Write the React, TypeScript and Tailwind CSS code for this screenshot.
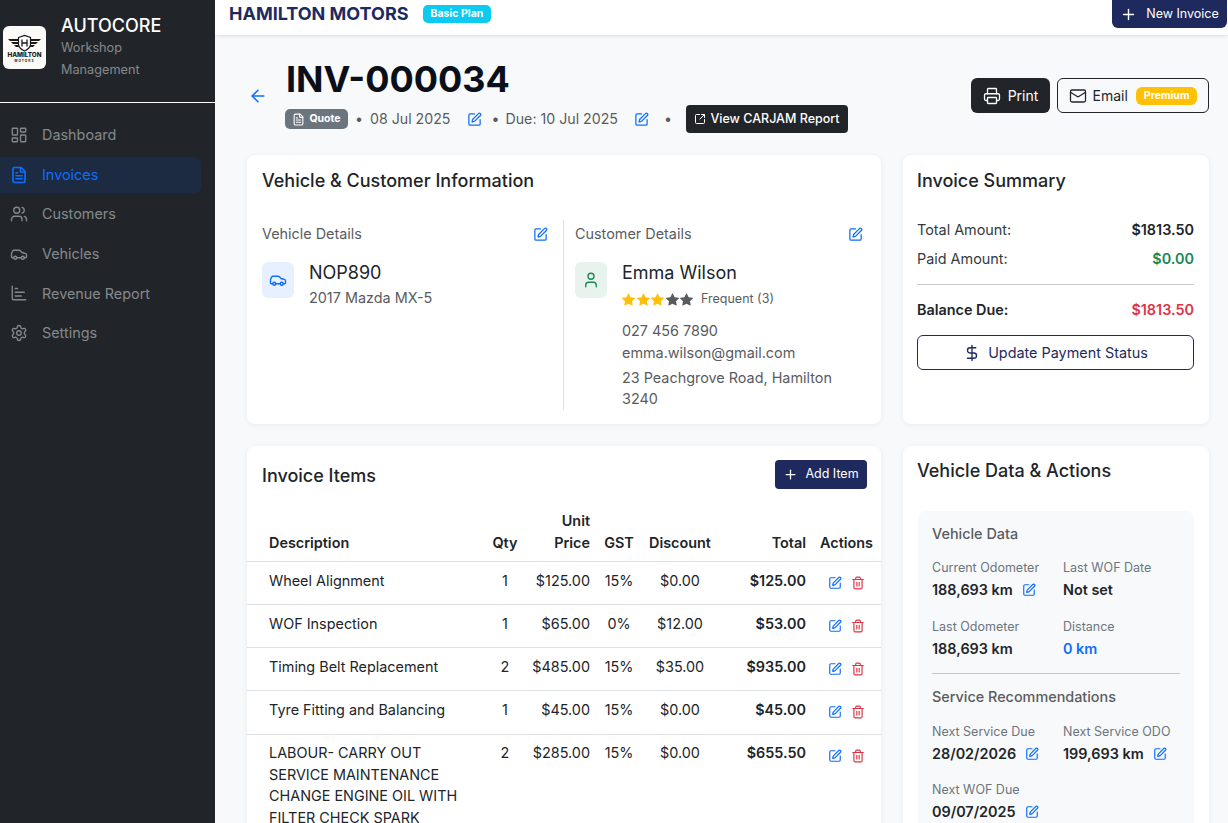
import {
  ArrowLeft,
  Car,
  ChartBar,
  DollarSign,
  FileText,
  LayoutDashboard,
  Mail,
  Plus,
  Printer,
  Settings,
  SquareArrowOutUpRight,
  SquarePen,
  Trash2,
  User,
  Users,
} from "lucide-react";
import { BsStarFill } from "react-icons/bs";

const navItems = [
  { label: "Dashboard", icon: LayoutDashboard },
  { label: "Invoices", icon: FileText, active: true },
  { label: "Customers", icon: Users },
  { label: "Vehicles", icon: Car },
  { label: "Revenue Report", icon: ChartBar },
  { label: "Settings", icon: Settings },
];

const rows = [
  { desc: ["Wheel Alignment"], qty: "1", price: "$125.00", gst: "15%", disc: "$0.00", total: "$125.00" },
  { desc: ["WOF Inspection"], qty: "1", price: "$65.00", gst: "0%", disc: "$12.00", total: "$53.00" },
  { desc: ["Timing Belt Replacement"], qty: "2", price: "$485.00", gst: "15%", disc: "$35.00", total: "$935.00" },
  { desc: ["Tyre Fitting and Balancing"], qty: "1", price: "$45.00", gst: "15%", disc: "$0.00", total: "$45.00" },
  {
    desc: ["LABOUR- CARRY OUT", "SERVICE MAINTENANCE", "CHANGE ENGINE OIL WITH", "FILTER CHECK SPARK"],
    qty: "2",
    price: "$285.00",
    gst: "15%",
    disc: "$0.00",
    total: "$655.50",
  },
];

function Logo() {
  return (
    <div className="flex h-[43px] w-[43px] shrink-0 items-center justify-center rounded-md bg-[#fbfaf8]">
      <svg viewBox="0 0 43 43" className="h-[43px] w-[43px]">
        <path d="M5 13h10l1 2H7zM8 16h8l1 2h-7zM11 19h6l1 2h-5z" fill="#1a1a1a" />
        <path d="M38 13H28l-1 2h9zM35 16h-8l-1 2h7zM32 19h-6l-1 2h5z" fill="#1a1a1a" />
        <path d="M15.500 11.500 21.500 9.500l6 2v7c0 3-3 5-6 6.500-3-1.500-6-3.500-6-6.500z" fill="#fff" stroke="#1a1a1a" strokeWidth="1.200" />
        <path d="M19 13.500v7M24 13.500v7M19 17h5" stroke="#1a1a1a" strokeWidth="1.300" fill="none" />
        <text x="21.500" y="31" textAnchor="middle" fontSize="6.300" fontWeight="800" fill="#1a1a1a" fontFamily="Inter, sans-serif">
          HAMILTON
        </text>
        <text x="21.500" y="35.500" textAnchor="middle" fontSize="3.200" fontWeight="700" letterSpacing="1" fill="#1a1a1a" fontFamily="Inter, sans-serif">
          MOTORS
        </text>
      </svg>
    </div>
  );
}

function Sidebar() {
  return (
    <aside className="flex w-[215px] shrink-0 flex-col bg-[#212529]">
      <div className="flex h-[103px] gap-[15px] border-b border-white pl-[3px] pt-[15px]">
        <div className="pt-[11px]">
          <Logo />
        </div>
        <div>
          <div className="text-[18px] leading-[22px] font-medium text-white">AUTOCORE</div>
          <div className="w-[100px] text-[12.700px] leading-[22px] text-[#85898d]">Workshop Management</div>
        </div>
      </div>
      <nav className="flex flex-col gap-[3.600px] pt-[14px]">
        {navItems.map((item) => {
          const Icon = item.icon;
          return (
            <a
              key={item.label}
              className={`flex h-[36px] w-[201px] items-center gap-[14px] rounded-r-md pl-[10px] text-[14.400px] ${
                item.active ? "bg-[#1c2b42] text-[#0d6efd]" : "text-[#85898d]"
              }`}
            >
              <Icon size={18} strokeWidth={item.active ? 2.200 : 1.800} />
              {item.label}
            </a>
          );
        })}
      </nav>
    </aside>
  );
}

function TopBar() {
  return (
    <header className="flex h-[35px] shrink-0 items-start justify-between bg-white pl-[14px] pr-px shadow-[0_1px_4px_rgba(0,0,0,0.12)]">
      <div className="flex h-[27px] items-center gap-[14px]">
        <span className="text-[18px] font-bold text-[#1e2a5e]">HAMILTON MOTORS</span>
        <span className="flex h-[18px] items-center rounded-[5px] bg-[#0dcaf0] px-[8px] text-[10.500px] font-bold text-white">
          Basic Plan
        </span>
      </div>
      <button className="-mt-2 flex h-[36px] w-[115px] items-center justify-center gap-[9px] rounded-md bg-[#1e2a5e] pt-2 text-[12.500px] text-white">
        <Plus size={17} />
        New Invoice
      </button>
    </header>
  );
}

function EditIcon({ size = 15 }: { size?: number }) {
  return <SquarePen size={size} className="shrink-0 text-[#0d6efd]" strokeWidth={2} />;
}

function PageHeader() {
  return (
    <div className="flex items-start justify-between">
      <div className="flex items-end">
        <ArrowLeft size={20} className="mb-[27px] ml-[1px] mr-[18px] text-[#0d6efd]" strokeWidth={1.800} />
        <div className="pt-[1px]">
          <h1 className="text-[36px] leading-[44px] font-bold text-[#0b0f19]">INV-000034</h1>
          <div className="mt-[4px] flex h-[28px] items-center text-[14.200px] text-[#595c5f]">
            <span className="-ml-px flex h-[20px] w-[63px] items-center justify-center gap-[4px] rounded-[5px] bg-[#6c757d] text-[10.500px] font-bold text-white">
              <FileText size={13} />
              Quote
            </span>
            <span className="mx-[7px]">•</span>
            <span>08 Jul 2025</span>
            <span className="ml-[16px]">
              <EditIcon />
            </span>
            <span className="ml-[10px] mr-[6px]">•</span>
            <span>Due: 10 Jul 2025</span>
            <span className="ml-[16px]">
              <EditIcon />
            </span>
            <span className="ml-[15px] mr-[14px]">•</span>
            <button className="flex h-[28px] items-center gap-[4px] rounded-[4px] bg-[#212529] px-[8.500px] text-[12.500px] font-medium text-white">
              <SquareArrowOutUpRight size={12} />
              View CARJAM Report
            </button>
          </div>
        </div>
      </div>
      <div className="flex gap-[7px] pt-[22px]">
        <button className="flex h-[35px] w-[79px] items-center justify-center gap-[7px] rounded-md bg-[#212529] text-[14px] text-white">
          <Printer size={18} strokeWidth={1.700} />
          Print
        </button>
        <button className="flex h-[35px] w-[152px] items-center justify-center gap-[6px] rounded-md border border-[#212529] text-[14px] text-[#212529]">
          <Mail size={18} strokeWidth={1.700} />
          Email
          <span className="ml-[2px] flex h-[18px] items-center rounded-[6px] bg-[#ffc107] px-[8px] text-[10.500px] font-bold text-white">
            Premium
          </span>
        </button>
      </div>
    </div>
  );
}

function VehicleCustomerCard() {
  return (
    <section className="h-[269px] rounded-lg bg-white px-[15px] pt-[14px] shadow-[0_1px_6px_rgba(0,0,0,0.06)]">
      <h2 className="text-[18px] leading-[24px] font-medium text-[#212529]">Vehicle &amp; Customer Information</h2>
      <div className="mt-[27px] grid grid-cols-[302px_1fr]">
        <div className="h-[190px] border-r border-[#dee2e6] pr-[15px] pt-[2px]">
          <div className="flex items-center justify-between text-[14.400px] leading-[24px] text-[#595c5f]">
            Vehicle Details
            <EditIcon />
          </div>
          <div className="mt-[16px] flex gap-[15px]">
            <div className="flex h-[36px] w-[32px] items-center justify-center rounded-md bg-[#e7f0ff]">
              <Car size={18} className="text-[#0d6efd]" strokeWidth={1.800} />
            </div>
            <div>
              <div className="text-[18px] leading-[22px] text-[#212529]">NOP890</div>
              <div className="mt-[4px] text-[14.400px] leading-[20px] text-[#595c5f]">2017 Mazda MX-5</div>
            </div>
          </div>
        </div>
        <div className="pl-[11px] pr-[3px] pt-[2px]">
          <div className="flex items-center justify-between text-[14.400px] leading-[24px] text-[#595c5f]">
            Customer Details
            <EditIcon />
          </div>
          <div className="mt-[16px] flex gap-[15px]">
            <div className="flex h-[36px] w-[32px] shrink-0 items-center justify-center rounded-md bg-[#e8f3ee]">
              <User size={18} className="text-[#198754]" strokeWidth={1.800} />
            </div>
            <div>
              <div className="text-[18px] leading-[22px] text-[#212529]">Emma Wilson</div>
              <div className="mt-[6px] flex items-center text-[12.500px] leading-[18px] text-[#595c5f]">
                <div className="flex gap-[1.500px]">
                  {[0, 1, 2, 3, 4].map((i) => (
                    <BsStarFill key={i} size={13} className={i < 3 ? "text-[#ffc107]" : "text-[#595c5f]"} />
                  ))}
                </div>
                <span className="ml-[8px]">Frequent (3)</span>
              </div>
              <div className="mt-[12px] text-[14.400px] leading-[22px] text-[#595c5f]">
                <div>027 456 7890</div>
                <div>emma.wilson@gmail.com</div>
                <div className="mt-[3px] leading-[21px]">
                  23 Peachgrove Road, Hamilton
                  <br />
                  3240
                </div>
              </div>
            </div>
          </div>
        </div>
      </div>
    </section>
  );
}

function InvoiceItems() {
  return (
    <section className="rounded-lg bg-white pt-[14px] shadow-[0_1px_6px_rgba(0,0,0,0.06)]">
      <div className="flex items-center justify-between pl-[15px] pr-[14px]">
        <h2 className="pt-[2px] text-[18px] font-medium text-[#212529]">Invoice Items</h2>
        <button className="flex h-[29px] w-[92px] items-center justify-center gap-[7px] rounded-[4px] bg-[#1e2a5e] text-[12.500px] text-white">
          <Plus size={15} />
          Add Item
        </button>
      </div>
      <table className="mt-[21px] w-full table-fixed border-collapse text-[14.400px] leading-[21.600px] text-[#212529]">
        <colgroup>
          <col className="w-[238px]" />
          <col className="w-[40px]" />
          <col className="w-[72px]" />
          <col className="w-[44px]" />
          <col className="w-[78px]" />
          <col className="w-[94px]" />
          <col />
        </colgroup>
        <thead>
          <tr className="border-b border-[#dee2e6] align-bottom">
            <th className="pb-[8px] pl-[22px] text-left font-semibold">Description</th>
            <th className="pb-[8px] text-center font-semibold">Qty</th>
            <th className="pb-[8px] pr-[7px] text-right font-semibold">
              Unit
              <br />
              Price
            </th>
            <th className="pb-[8px] text-center font-semibold">GST</th>
            <th className="pb-[8px] text-center font-semibold">Discount</th>
            <th className="pb-[8px] pr-[7px] text-right font-semibold">Total</th>
            <th className="pb-[8px] pl-[7px] text-left font-semibold">Actions</th>
          </tr>
        </thead>
        <tbody>
          {rows.map((row) => (
            <tr key={row.desc[0]} className="border-b border-[#dee2e6] align-top">
              <td className="pb-[13px] pl-[22px] pt-[7.500px]">
                {row.desc.map((line) => (
                  <div key={line}>{line}</div>
                ))}
              </td>
              <td className="pt-[7.500px] text-center">{row.qty}</td>
              <td className="pr-[7px] pt-[7.500px] text-right">{row.price}</td>
              <td className="pt-[7.500px] text-center">{row.gst}</td>
              <td className="pt-[7.500px] text-center">{row.disc}</td>
              <td className="pr-[7px] pt-[7.500px] text-right font-semibold">{row.total}</td>
              <td className="pl-[15px] pt-[14px]">
                <div className="flex gap-[9px]">
                  <EditIcon size={14} />
                  <Trash2 size={14} className="text-[#dc3545]" strokeWidth={2} />
                </div>
              </td>
            </tr>
          ))}
        </tbody>
      </table>
    </section>
  );
}

function SummaryRow({ label, value, tone, bold }: { label: string; value: string; tone: string; bold?: boolean }) {
  return (
    <div className="flex items-center justify-between text-[14.400px] leading-[20px]">
      <span className={bold ? "font-semibold text-[#212529]" : "text-[#343a40]"}>{label}</span>
      <span className={`font-semibold ${tone}`}>{value}</span>
    </div>
  );
}

function InvoiceSummary() {
  return (
    <section className="h-[269px] rounded-lg bg-white pl-[14px] pr-[15px] pt-[14px] shadow-[0_1px_6px_rgba(0,0,0,0.06)]">
      <h2 className="text-[18px] leading-[24px] font-medium text-[#212529]">Invoice Summary</h2>
      <div className="mt-[27px] flex flex-col gap-[9px]">
        <SummaryRow label="Total Amount:" value="$1813.50" tone="text-[#212529]" />
        <SummaryRow label="Paid Amount:" value="$0.00" tone="text-[#198754]" />
      </div>
      <div className="mb-[15px] mt-[15px] border-t border-[#c9cccf]" />
      <SummaryRow label="Balance Due:" value="$1813.50" tone="text-[#dc3545]" bold />
      <button className="mt-[15px] flex h-[35px] w-full items-center justify-center gap-[7px] rounded-md border border-[#1e2a5e] text-[14.400px] text-[#1e2a5e]">
        <DollarSign size={18} strokeWidth={1.800} />
        Update Payment Status
      </button>
    </section>
  );
}

function Metric({ label, value, edit, blue }: { label: string; value: string; edit?: boolean; blue?: boolean }) {
  return (
    <div>
      <div className="text-[12.500px] leading-[18px] text-[#6c757d]">{label}</div>
      <div className={`mt-[2px] flex items-center gap-[9px] text-[14.400px] leading-[21px] font-semibold ${blue ? "text-[#0d6efd]" : "text-[#212529]"}`}>
        {value}
        {edit && <EditIcon size={14} />}
      </div>
    </div>
  );
}

function VehicleData() {
  return (
    <section className="flex-1 rounded-lg bg-white px-[15px] pt-[12px] shadow-[0_1px_6px_rgba(0,0,0,0.06)]">
      <h2 className="-ml-px text-[18px] leading-[26px] font-medium text-[#212529]">Vehicle Data &amp; Actions</h2>
      <div className="mt-[27px] rounded-lg bg-[#f8f9fa] px-[14px] pt-[13px] pb-[20px]">
        <div className="text-[14.400px] leading-[20px] font-medium text-[#595c5f]">Vehicle Data</div>
        <div className="mt-[15px] grid grid-cols-[131px_1fr] gap-y-[18px]">
          <Metric label="Current Odometer" value="188,693 km" edit />
          <Metric label="Last WOF Date" value="Not set" />
          <Metric label="Last Odometer" value="188,693 km" />
          <Metric label="Distance" value="0 km" blue />
        </div>
        <div className="mb-[13px] mt-[14px] border-t border-[#c4c7ca]" />
        <div className="text-[14.400px] leading-[20px] font-medium text-[#595c5f]">Service Recommendations</div>
        <div className="mt-[16px] grid grid-cols-[131px_1fr] gap-y-[17px]">
          <Metric label="Next Service Due" value="28/02/2026" edit />
          <Metric label="Next Service ODO" value="199,693 km" edit />
          <Metric label="Next WOF Due" value="09/07/2025" edit />
        </div>
      </div>
    </section>
  );
}

export default function App() {
  return (
    <div className="flex h-screen overflow-hidden bg-[#f8f9fa] font-['Inter',sans-serif]">
      <Sidebar />
      <main className="flex min-w-0 flex-1 flex-col">
        <TopBar />
        <div className="flex flex-col gap-[22px] pl-[32px] pr-[19px] pt-[21px]">
          <PageHeader />
          <div className="grid grid-cols-[634px_306px] gap-x-[22px]">
            <div className="flex flex-col gap-[22px]">
              <VehicleCustomerCard />
              <InvoiceItems />
            </div>
            <div className="flex flex-col gap-[22px]">
              <InvoiceSummary />
              <VehicleData />
            </div>
          </div>
        </div>
      </main>
    </div>
  );
}
